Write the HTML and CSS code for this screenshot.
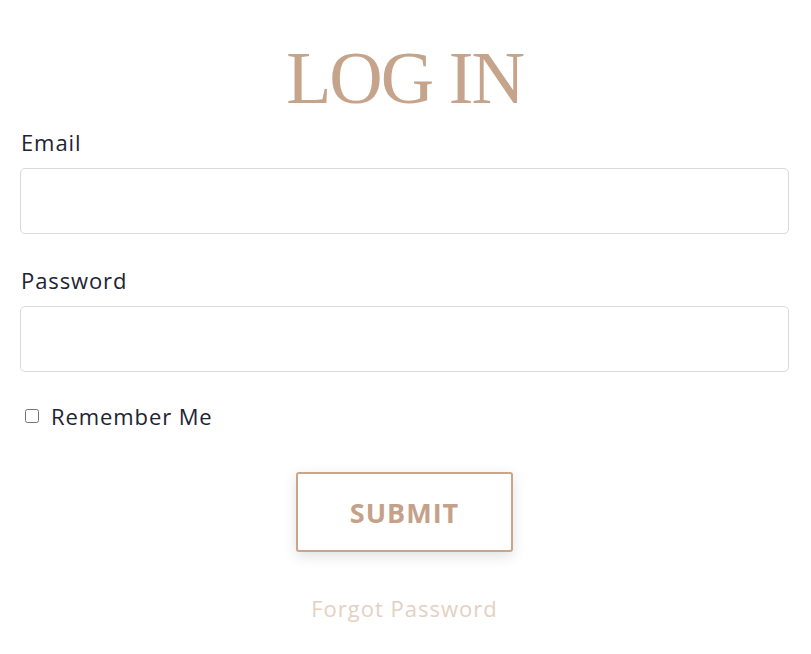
FILE: index.html
```html
<!DOCTYPE html>
<html>
<head>
<meta charset="utf-8">
<link rel="stylesheet" href="styles.css">
</head>
<body>
<main class="login">
  <h1 class="title">LOG IN</h1>
  <form class="form">
    <label class="field">
      <span class="label">Email</span>
      <input class="input" type="email">
    </label>
    <label class="field">
      <span class="label">Password</span>
      <input class="input" type="password">
    </label>
    <label class="remember">
      <input class="check" type="checkbox">
      <span>Remember Me</span>
    </label>
    <div class="actions">
      <button class="submit" type="button">SUBMIT</button>
    </div>
    <div class="forgot-row">
      <a class="forgot" href="#">Forgot Password</a>
    </div>
  </form>
</main>
</body>
</html>
```
FILE: styles.css
```css
* { box-sizing: border-box; }
html, body { margin: 0; background: #fff; }
body {
  font-family: "Open Sans", "Noto Sans", sans-serif;
  color: #1d2333;
}
.login {
  padding: 0 22px 0 20px;
}
.title {
  margin: 0 0 8px;
  padding-top: 36px;
  text-align: center;
  font-family: "Liberation Serif", "DejaVu Serif", serif;
  font-weight: 400;
  font-size: 74px;
  line-height: 84px;
  color: #c5a48b;
  letter-spacing: -2px;
}
.form {
  display: flex;
  flex-direction: column;
}
.field {
  display: flex;
  flex-direction: column;
}
.field + .field { margin-top: 32px; }
.label {
  font-size: 22px;
  line-height: 28px;
  padding-left: 1px;
  margin-bottom: 12px;
  letter-spacing: 0.9px;
}
.input {
  height: 66px;
  border: 1px solid #dadada;
  border-radius: 5px;
  background: #fff;
}
.remember {
  display: flex;
  align-items: center;
  gap: 12px;
  margin-top: 30px;
  font-size: 22px;
  line-height: 28px;
  padding-left: 5px;
  letter-spacing: 0.9px;
}
.check {
  margin: 0;
  width: 14px;
  height: 14px;
}
.actions {
  display: flex;
  justify-content: center;
  margin-top: 42px;
}
.submit {
  width: 217px;
  height: 80px;
  background: #fff;
  border: 2px solid #c9a58c;
  border-radius: 3px;
  box-shadow: 0 4px 14px rgba(0,0,0,0.12);
  font-family: "Open Sans", "Noto Sans", sans-serif;
  font-weight: 700;
  font-size: 27px;
  letter-spacing: 1px;
  color: #c4a188;
  cursor: pointer;
}
.forgot-row {
  display: flex;
  justify-content: center;
  margin-top: 42px;
}
.forgot {
  font-size: 22px;
  line-height: 28px;
  color: #e4d0c3;
  text-decoration: none;
  letter-spacing: 1px;
}
```
